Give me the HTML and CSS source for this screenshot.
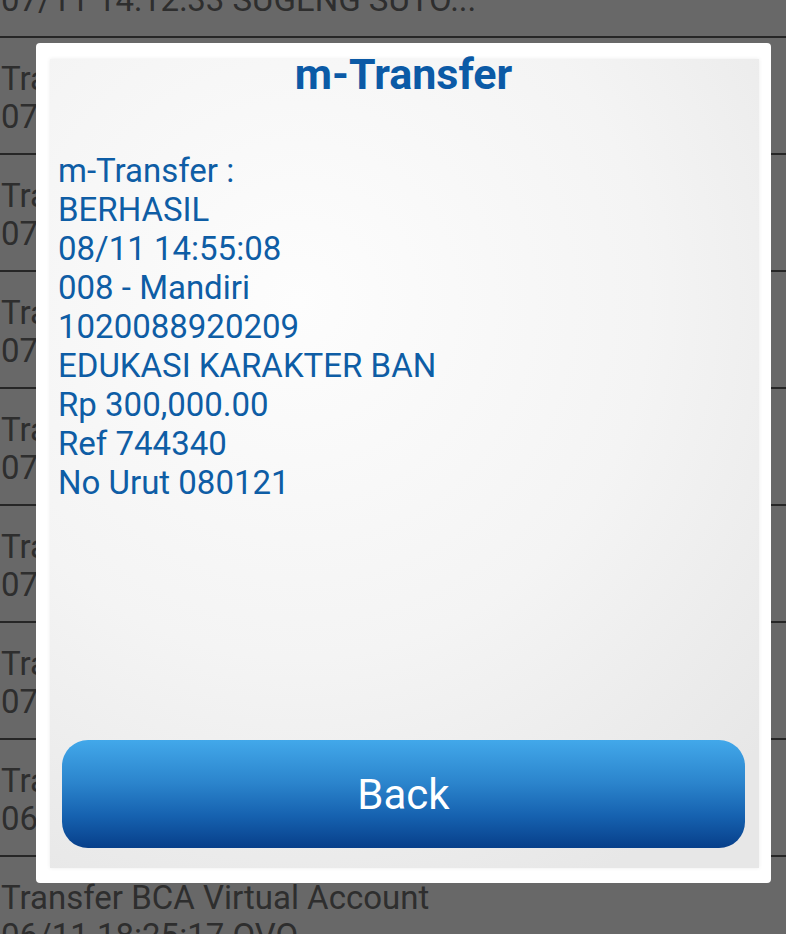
FILE: index.html
```html
<!DOCTYPE html>
<html>
<head>
<meta charset="utf-8">
<link rel="stylesheet" href="styles.css">
</head>
<body>
<div class="list">
  <div class="row"><div class="l1">Transfer Antar Rekening</div><div class="l2">07/11 14:12:33 SUGENG SUTO...</div></div>
  <div class="row"><div class="l1">Transfer Antar Rekening</div><div class="l2">07/11 13:05:12 SUGENG SUTO...</div></div>
  <div class="row"><div class="l1">Transfer Antar Rekening</div><div class="l2">07/11 12:41:50 SUGENG SUTO...</div></div>
  <div class="row"><div class="l1">Transfer Antar Bank</div><div class="l2">07/11 10:22:04 EDUKASI KARA...</div></div>
  <div class="row"><div class="l1">Transfer Antar Rekening</div><div class="l2">07/11 09:15:47 SUGENG SUTO...</div></div>
  <div class="row"><div class="l1">Transfer Antar Rekening</div><div class="l2">07/11 08:02:31 SUGENG SUTO...</div></div>
  <div class="row"><div class="l1">Transfer Antar Rekening</div><div class="l2">07/11 07:48:19 SUGENG SUTO...</div></div>
  <div class="row"><div class="l1">Transfer BCA Virtual Account</div><div class="l2">06/11 19:02:44 OVO</div></div>
  <div class="row"><div class="l1">Transfer BCA Virtual Account</div><div class="l2">06/11 18:25:17 OVO</div></div>
</div>

<div class="dialog">
  <div class="panel">
    <div class="title">m-Transfer</div>
    <div class="body">
      <div>m-Transfer :</div>
      <div>BERHASIL</div>
      <div>08/11 14:55:08</div>
      <div>008 - Mandiri</div>
      <div>1020088920209</div>
      <div>EDUKASI KARAKTER BAN</div>
      <div>Rp 300,000.00</div>
      <div>Ref 744340</div>
      <div>No Urut 080121</div>
    </div>
    <div class="spacer"></div>
    <div class="btn">Back</div>
  </div>
</div>
</body>
</html>
```

FILE: styles.css
```css
html, body {
  margin: 0;
  padding: 0;
  width: 786px;
  height: 934px;
  overflow: hidden;
  background: #686868;
  font-family: Roboto, "Noto Sans", sans-serif;
}

.list {
  margin-top: -79px;
}

.row {
  height: 117px;
  box-sizing: border-box;
  padding: 22px 0 0 1px;
  border-bottom: 2px solid #262626;
  color: #2e2e2e;
  font-size: 33px;
  line-height: 38px;
  white-space: nowrap;
  overflow: hidden;
}

.dialog {
  position: absolute;
  left: 36px;
  top: 43px;
  width: 735px;
  height: 840px;
  background: #ffffff;
  border-radius: 4px;
  box-sizing: border-box;
  padding: 16px 12px 15px 14px;
  display: flex;
}

.panel {
  flex: 1;
  display: flex;
  flex-direction: column;
  background: radial-gradient(ellipse 90% 80% at 35% 30%, #fdfdfd 0%, #f4f4f4 55%, #e7e7e7 100%);
  box-shadow: 0 0 4px rgba(0, 0, 0, 0.08);
  padding: 0 14px 20px 8px;
}

.title {
  text-align: center;
  font-weight: 700;
  font-size: 43px;
  line-height: 30px;
  color: #0b5aa6;
  padding-left: 4px;
}

.body {
  margin-top: 62px;
  font-size: 33px;
  line-height: 39px;
  color: #0e5da5;
}

.spacer {
  flex: 1;
}

.btn {
  margin-left: 4px;
  height: 108px;
  border-radius: 26px;
  background: linear-gradient(to bottom, #42a8ea 0%, #2b84cc 40%, #1662b0 70%, #073f8a 100%);
  color: #ffffff;
  font-size: 42px;
  display: flex;
  align-items: center;
  justify-content: center;
}
```
